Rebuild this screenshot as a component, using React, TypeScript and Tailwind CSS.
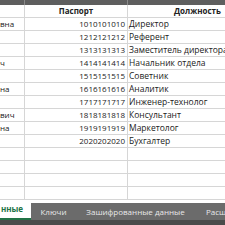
import React from "react";

const rows: [string, string, string][] = [
  ["вна", "1010101010", "Директор"],
  ["", "1212121212", "Референт"],
  ["", "1313131313", "Заместитель директора"],
  ["ч", "1414141414", "Начальник отдела"],
  ["", "1515151515", "Советник"],
  ["на", "1616161616", "Аналитик"],
  ["", "1717171717", "Инженер-технолог"],
  ["вич", "1818181818", "Консультант"],
  ["на", "1919191919", "Маркетолог"],
  ["", "2020202020", "Бухгалтер"],
  ["", "", ""],
  ["", "", ""],
  ["", "", ""],
  ["", "", ""],
];

export default function App() {
  return (
    <div
      className="w-[225px] h-[225px] overflow-hidden bg-white flex flex-col"
      style={{ fontFamily: '"Open Sans", "Liberation Sans", Arial, sans-serif' }}
    >
      {/* column header strip */}
      <div className="h-[5px] bg-[#5e5e5e] flex shrink-0 relative">
        <div className="w-[25px] border-r border-[#8a8a8a]" />
        <div className="w-[103px] border-r border-[#8a8a8a]" />
        <div className="flex-1" />
      </div>
      {/* grid */}
      <div className="flex-1 flex flex-col overflow-hidden text-[8px] text-[#222]">
        <div className="flex h-[13px] shrink-0 border-b border-[#d6d6d6] font-bold">
          <div className="w-[25px] shrink-0 border-r border-[#d6d6d6]" />
          <div className="w-[103px] shrink-0 border-r border-[#d6d6d6] flex items-center justify-center leading-none">
            Паспорт
          </div>
          <div className="w-[148px] shrink-0 flex items-center pl-[46px] leading-none whitespace-nowrap">
            Должность
          </div>
        </div>
        {rows.map((r, i) => (
          <div key={i} className="flex h-[13px] shrink-0 border-b border-[#d6d6d6]">
            <div className="w-[25px] shrink-0 border-r border-[#d6d6d6] flex items-center leading-none whitespace-nowrap overflow-hidden">
              {r[0]}
            </div>
            <div className="w-[103px] shrink-0 border-r border-[#d6d6d6] flex items-center justify-end pr-[2px] leading-none">
              {r[1]}
            </div>
            <div className="w-[148px] shrink-0 flex items-center pl-[1px] leading-none whitespace-nowrap text-[8.5px]">
              {r[2]}
            </div>
          </div>
        ))}
      </div>
      {/* sheet tabs */}
      <div className="h-[22px] shrink-0 flex flex-col bg-[#4b4b4b]">
        <div className="h-[17px] bg-[#6b6b6b] flex items-stretch text-[8px] text-[#e8e8e8] whitespace-nowrap">
          <div className="w-[31px] shrink-0 bg-white flex items-center justify-end pr-[8px] text-[#217346] font-bold border-b-2 border-[#217346] -mt-[3px]">
            нные
          </div>
          <div className="w-[45px] shrink-0 flex items-center justify-center">Ключи</div>
          <div className="w-px my-[4px] bg-[#8e8e8e]" />
          <div className="w-[119px] shrink-0 flex items-center justify-center">Зашифрованные данные</div>
          <div className="w-px my-[4px] bg-[#8e8e8e]" />
          <div className="flex-1 flex items-center pl-[11px]">Расшифрованные данные</div>
        </div>
      </div>
    </div>
  );
}
